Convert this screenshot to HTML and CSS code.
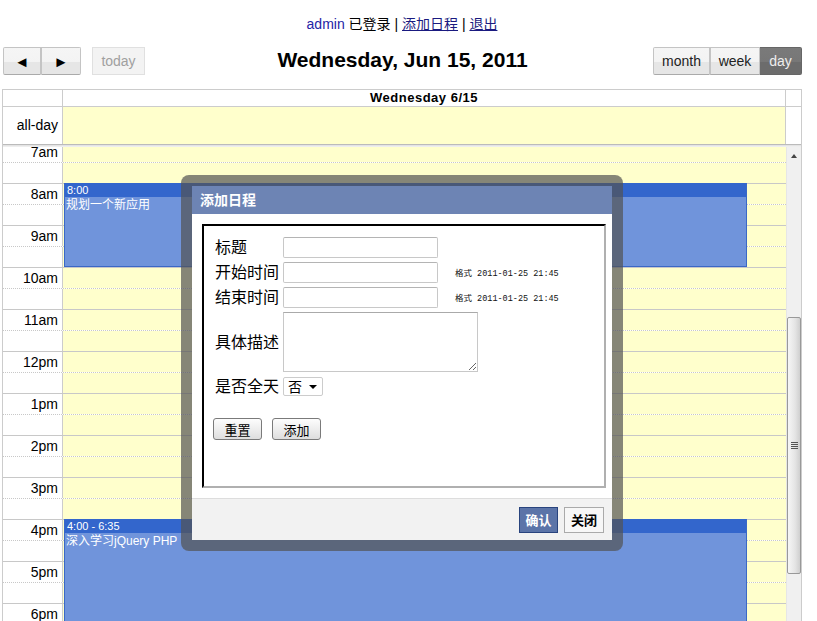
FILE: index.html
```html
<!DOCTYPE html>
<html lang="zh-CN">
<head>
    <meta charset="UTF-8">
    <title>日程管理</title>
    <link rel="stylesheet" href="styles.css">
</head>
<body>
    <div class="userbar">
        <span class="user">admin</span> 已登录 | <a href="#">添加日程</a> | <a href="#">退出</a>
    </div>

    <div class="calendar">
        <div class="toolbar">
            <div class="tb-left">
                <span class="btn-group">
                    <button class="fc-btn prev">&#9668;</button><button class="fc-btn next">&#9658;</button>
                </span>
                <button class="fc-btn disabled">today</button>
            </div>
            <h2 class="title">Wednesday, Jun 15, 2011</h2>
            <div class="tb-right">
                <span class="btn-group">
                    <button class="fc-btn month">month</button><button class="fc-btn week">week</button><button class="fc-btn day active">day</button>
                </span>
            </div>
        </div>

        <div class="view">
            <div class="row head-row">
                <div class="axis"></div>
                <div class="day-head">Wednesday 6/15</div>
                <div class="gutter"></div>
            </div>
            <div class="row allday-row">
                <div class="axis">all-day</div>
                <div class="day-cell"></div>
                <div class="gutter"></div>
            </div>
            <div class="divider"></div>

            <div class="scroller">
                <div class="slots">
                    <div class="slot"><div class="slot-axis">7am</div><div class="slot-day"></div></div>
                    <div class="slot half"><div class="slot-axis"></div><div class="slot-day"></div></div>
                    <div class="slot"><div class="slot-axis">8am</div><div class="slot-day"></div></div>
                    <div class="slot half"><div class="slot-axis"></div><div class="slot-day"></div></div>
                    <div class="slot"><div class="slot-axis">9am</div><div class="slot-day"></div></div>
                    <div class="slot half"><div class="slot-axis"></div><div class="slot-day"></div></div>
                    <div class="slot"><div class="slot-axis">10am</div><div class="slot-day"></div></div>
                    <div class="slot half"><div class="slot-axis"></div><div class="slot-day"></div></div>
                    <div class="slot"><div class="slot-axis">11am</div><div class="slot-day"></div></div>
                    <div class="slot half"><div class="slot-axis"></div><div class="slot-day"></div></div>
                    <div class="slot"><div class="slot-axis">12pm</div><div class="slot-day"></div></div>
                    <div class="slot half"><div class="slot-axis"></div><div class="slot-day"></div></div>
                    <div class="slot"><div class="slot-axis">1pm</div><div class="slot-day"></div></div>
                    <div class="slot half"><div class="slot-axis"></div><div class="slot-day"></div></div>
                    <div class="slot"><div class="slot-axis">2pm</div><div class="slot-day"></div></div>
                    <div class="slot half"><div class="slot-axis"></div><div class="slot-day"></div></div>
                    <div class="slot"><div class="slot-axis">3pm</div><div class="slot-day"></div></div>
                    <div class="slot half"><div class="slot-axis"></div><div class="slot-day"></div></div>
                    <div class="slot"><div class="slot-axis">4pm</div><div class="slot-day"></div></div>
                    <div class="slot half"><div class="slot-axis"></div><div class="slot-day"></div></div>
                    <div class="slot"><div class="slot-axis">5pm</div><div class="slot-day"></div></div>
                    <div class="slot half"><div class="slot-axis"></div><div class="slot-day"></div></div>
                    <div class="slot"><div class="slot-axis">6pm</div><div class="slot-day"></div></div>
                    <div class="slot half"><div class="slot-axis"></div><div class="slot-day"></div></div>
                    <div class="slot"><div class="slot-axis">7pm</div><div class="slot-day"></div></div>
                    <div class="slot half"><div class="slot-axis"></div><div class="slot-day"></div></div>

                    <!-- events: top/height come from start time and duration -->
                    <div class="event" style="top: 41px; height: 84px;">
                        <div class="event-time">8:00</div>
                        <div class="event-title">规划一个新应用</div>
                    </div>
                    <div class="event" style="top: 377px; height: 111px;">
                        <div class="event-time">4:00 - 6:35</div>
                        <div class="event-title">深入学习jQuery PHP</div>
                    </div>
                </div>

                <div class="scrollbar">
                    <div class="sb-arrow"></div>
                    <div class="sb-thumb"><span class="sb-grip"></span></div>
                </div>
            </div>
        </div>
    </div>

    <div class="dialog-wrap">
        <div class="dialog">
            <div class="dialog-title">添加日程</div>
            <div class="dialog-content">
                <div class="form-box">
                    <form class="event-form">
                        <div class="form-grid">
                            <label>标题</label>
                            <input type="text" class="txt">
                            <span></span>

                            <label>开始时间</label>
                            <input type="text" class="txt">
                            <span class="hint">格式 2011-01-25 21:45</span>

                            <label>结束时间</label>
                            <input type="text" class="txt">
                            <span class="hint">格式 2011-01-25 21:45</span>

                            <label class="mid">具体描述</label>
                            <textarea class="desc"></textarea>

                            <label>是否全天</label>
                            <span class="select-wrap">
                                <select class="allday">
                                    <option>否</option>
                                    <option>是</option>
                                </select>
                            </span>
                            <span></span>
                        </div>
                        <div class="form-buttons">
                            <button type="reset" class="form-btn">重置</button>
                            <button type="button" class="form-btn">添加</button>
                        </div>
                    </form>
                </div>
            </div>
            <div class="dialog-footer">
                <button class="dlg-btn primary">确认</button>
                <button class="dlg-btn">关闭</button>
            </div>
        </div>
    </div>
</body>
</html>
```

FILE: styles.css
```css
* {
    margin: 0;
    padding: 0;
    box-sizing: border-box;
}

html, body {
    overflow: hidden;
}

body {
    font-family: 'Liberation Sans', 'Noto Sans CJK SC', sans-serif;
    background: #fff;
    color: #000;
    height: 621px;
}

/* top user bar */
.userbar {
    width: 800px;
    text-align: center;
    font-size: 14px;
    line-height: 18px;
    padding-top: 15px;
    padding-left: 4px;
}

.userbar .user {
    color: #2424a6;
}

.userbar a {
    color: #1a1a80;
}

/* calendar */
.calendar {
    width: 800px;
    margin-left: 2px;
}

.toolbar {
    display: grid;
    grid-template-columns: 1fr auto 1fr;
    align-items: center;
    margin-top: 13px;
    height: 28px;
    margin-bottom: 15px;
}

.tb-left {
    display: flex;
    gap: 11px;
    padding-left: 1px;
}

.tb-right {
    display: flex;
    justify-content: flex-end;
}

.btn-group {
    display: flex;
}

.title {
    font-size: 21px;
    font-weight: bold;
    line-height: 28px;
    padding-left: 1px;
    padding-bottom: 2px;
}

.fc-btn {
    height: 28px;
    font-family: 'Liberation Sans', sans-serif;
    font-size: 14px;
    color: #222;
    border: 1px solid #c4c4c4;
    border-bottom-color: #aaa;
    background: linear-gradient(#f5f5f5 0, #f3f3f3 55%, #e6e6e6 55%, #e6e6e6 100%);
    padding: 0;
}

.btn-group .fc-btn + .fc-btn {
    border-left: none;
}

.fc-btn.prev {
    width: 38px;
    font-size: 15px;
    color: #000;
    border-radius: 2px 0 0 2px;
}

.fc-btn.next {
    width: 40px;
    font-size: 15px;
    color: #000;
    border-left: 1px solid #c4c4c4 !important;
    border-radius: 0 2px 2px 0;
}

.fc-btn.disabled {
    width: 53px;
    color: #a0a0a0;
    background: #f3f3f3;
    border-color: #e0e0e0;
}

.fc-btn.month {
    width: 57px;
    border-radius: 2px 0 0 2px;
}

.fc-btn.week {
    width: 50px;
    border-left: 1px solid #c4c4c4 !important;
}

.fc-btn.day {
    width: 42px;
}

.fc-btn.active {
    color: #eee;
    background: linear-gradient(#7a7a7a 0, #777 55%, #6c6c6c 55%, #6c6c6c 100%);
    border-color: #666;
    border-radius: 0 2px 2px 0;
}

.view {
    border: 1px solid #ccc;
    border-bottom: none;
}

.row {
    display: grid;
    grid-template-columns: 60px 1fr 15px;
}

.axis {
    border-right: 1px solid #ccc;
    text-align: right;
    padding-right: 4px;
    font-size: 14px;
}

.head-row {
    height: 17px;
    border-bottom: 1px solid #ccc;
}

.day-head {
    font-size: 13px;
    font-weight: bold;
    letter-spacing: 0.5px;
    text-align: center;
    line-height: 16px;
    border-right: 1px solid #ccc;
}

.allday-row {
    height: 38px;
    border-bottom: 1px solid #bbb;
}

.allday-row .axis {
    line-height: 37px;
}

.day-cell {
    background: #ffffcc;
    border-right: 1px solid #ccc;
}

.divider {
    height: 2px;
    background: #e4e4e4;
    border-bottom: 1px solid #eee;
}

.scroller {
    display: grid;
    grid-template-columns: 1fr 15px;
    height: 474px;
    overflow: hidden;
}

.slots {
    position: relative;
    margin-top: -5px;
}

.slot {
    display: grid;
    grid-template-columns: 60px 1fr;
    height: 21px;
    border-bottom: 1px dotted #c8c8c8;
}

.slot.half {
    border-bottom: 1px solid #c8c8c8;
}

.slot-axis {
    border-right: 1px solid #ccc;
    background: #fff;
    text-align: right;
    padding-right: 4px;
    font-size: 14px;
    line-height: 20px;
}

.slot-day {
    background: #ffffcc;
}

.event {
    position: absolute;
    left: 61px;
    width: 683px;
    background: #7094db;
    border: 1px solid #3a68c6;
    border-top: none;
    color: #fff;
    overflow: hidden;
}

.event-time {
    background: #3366cc;
    font-size: 11px;
    line-height: 14px;
    padding-left: 2px;
}

.event-title {
    font-size: 12px;
    line-height: 16px;
    padding-left: 1px;
}

.scrollbar {
    background: #f0f0f0;
    border-left: 1px solid #e6e6e6;
    display: flex;
    flex-direction: column;
    align-items: center;
}

.sb-arrow {
    margin-top: 7px;
    width: 0;
    height: 0;
    border-left: 3px solid transparent;
    border-right: 3px solid transparent;
    border-bottom: 4px solid #444;
}

.sb-thumb {
    margin-top: 159px;
    width: 14px;
    height: 257px;
    border: 1px solid #999;
    border-radius: 2px;
    background: linear-gradient(to right, #f6f6f6, #e4e4e4 60%, #cfcfcf);
    display: flex;
    align-items: center;
    justify-content: center;
}

.sb-grip {
    width: 7px;
    height: 7px;
    background: repeating-linear-gradient(#555 0, #555 1px, transparent 1px, transparent 2px);
}

/* dialog */
.dialog-wrap {
    position: absolute;
    left: 181px;
    top: 175px;
    width: 442px;
    height: 376px;
    padding: 11px;
    border-radius: 8px;
    background: rgba(82, 82, 82, 0.7);
}

.dialog {
    background: #fff;
    height: 100%;
    display: flex;
    flex-direction: column;
}

.dialog-title {
    height: 28px;
    line-height: 28px;
    background: #6d84b4;
    color: #fff;
    font-size: 14px;
    font-weight: bold;
    padding-left: 8px;
}

.dialog-content {
    padding: 10px 6px 10px 10px;
}

.form-box {
    height: 264px;
    border: 2px solid;
    border-color: #000 #b0b0b0 #b0b0b0 #000;
}

.event-form {
    padding: 11px 0 0 11px;
}

.form-grid {
    display: grid;
    grid-template-columns: 68px 155px 1fr;
    row-gap: 4px;
    align-items: center;
}

.form-grid label {
    font-size: 16px;
    line-height: 21px;
}

.txt {
    width: 155px;
    height: 21px;
    border: 1px solid #c8c8c8;
    border-top-color: #b4b4b4;
    border-radius: 2px;
}

.hint {
    font-family: 'Liberation Mono', 'Noto Sans CJK SC', monospace;
    font-size: 8.5px;
    margin-left: 17px;
    color: #111;
}

.desc {
    grid-column: span 2;
    width: 195px;
    height: 60px;
    border: 1px solid #c8c8c8;
    border-top-color: #aaa;
}

.select-wrap {
    position: relative;
    width: 40px;
    height: 19px;
}

.select-wrap::after {
    content: "";
    position: absolute;
    right: 6px;
    top: 8px;
    border-left: 4px solid transparent;
    border-right: 4px solid transparent;
    border-top: 4px solid #000;
    pointer-events: none;
}

.allday {
    appearance: none;
    -webkit-appearance: none;
    display: block;
    width: 40px;
    height: 19px;
    font-size: 14px;
    line-height: 17px;
    font-family: 'Noto Sans CJK SC', sans-serif;
    border: 1px solid #ccc;
    border-radius: 2px;
    background: #fff;
    padding: 0 0 0 4px;
    color: #000;
}

.form-buttons {
    display: flex;
    gap: 10px;
    margin-top: 21px;
    margin-left: -2px;
}

.form-btn {
    width: 49px;
    height: 22px;
    font-family: 'Noto Sans CJK SC', sans-serif;
    font-size: 13px;
    border: 1px solid #7a7a7a;
    border-radius: 3px;
    background: linear-gradient(#fdfdfd, #dedede);
}

.dialog-footer {
    flex: 1;
    background: #f2f2f2;
    border-top: 1px solid #ddd;
    display: flex;
    justify-content: flex-end;
    align-items: center;
    gap: 6px;
    padding-right: 8px;
}

.dlg-btn {
    width: 40px;
    height: 26px;
    font-family: 'Noto Sans CJK SC', sans-serif;
    font-size: 13px;
    font-weight: bold;
    background: #f7f7f7;
    border: 1px solid #aaa;
}

.dlg-btn.primary {
    width: 39px;
    color: #fff;
    background: #5b74a8;
    border-color: #29447e;
}
```
